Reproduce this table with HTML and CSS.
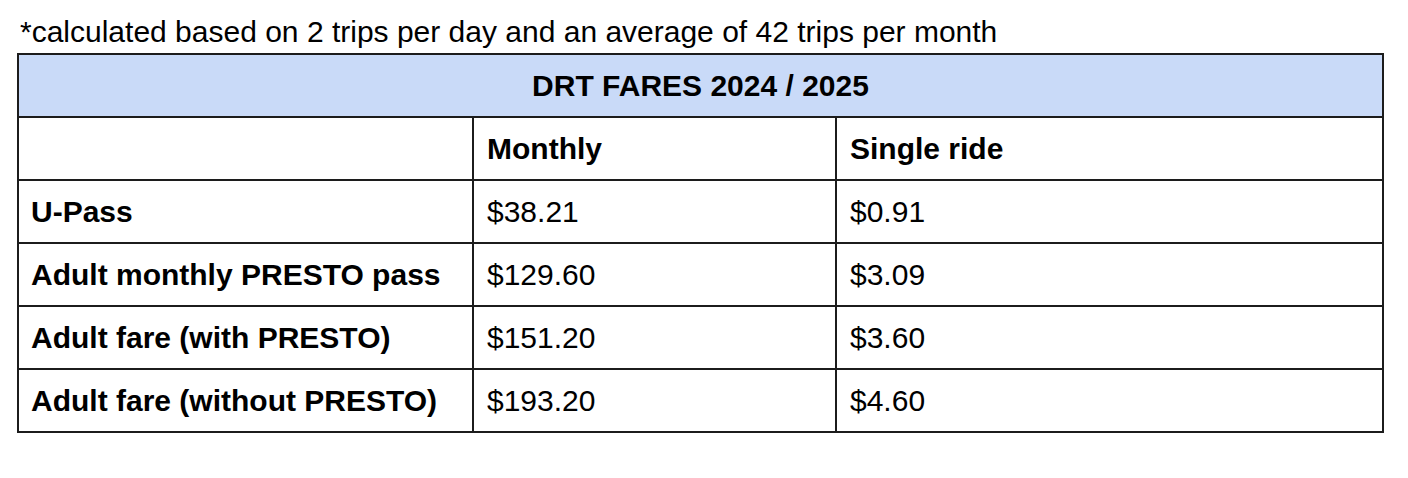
FILE: index.html
```html
<!DOCTYPE html>
<html>
<head>
<meta charset="utf-8">
<link rel="stylesheet" href="styles.css">
</head>
<body>
<div class="page">
  <p class="note">*calculated based on 2 trips per day and an average of 42 trips per month</p>
  <table class="fares">
    <colgroup>
      <col class="c1"><col class="c2"><col class="c3">
    </colgroup>
    <tr><th colspan="3" class="title">DRT FARES 2024 / 2025</th></tr>
    <tr><td></td><td class="b">Monthly</td><td class="b">Single ride</td></tr>
    <tr><td class="b">U-Pass</td><td>$38.21</td><td>$0.91</td></tr>
    <tr><td class="b">Adult monthly PRESTO pass</td><td>$129.60</td><td>$3.09</td></tr>
    <tr><td class="b">Adult fare (with PRESTO)</td><td>$151.20</td><td>$3.60</td></tr>
    <tr><td class="b">Adult fare (without PRESTO)</td><td>$193.20</td><td>$4.60</td></tr>
  </table>
</div>
</body>
</html>
```
FILE: styles.css
```css
html, body { margin: 0; padding: 0; background: #fff; }
body { font-family: "Liberation Sans", Arial, sans-serif; color: #000; }
.page { padding: 15px 0 0 17px; }
.note { margin: 0 0 5px 3px; font-size: 30px; line-height: 33px; }
.fares { border-collapse: collapse; width: 1367px; table-layout: fixed; }
.c1 { width: 455px; }
.c2 { width: 363px; }
.fares th, .fares td {
  border: 2px solid #1c1c1c;
  height: 61px;
  padding: 0 0 0 12px;
  font-size: 30px;
  text-align: left;
  vertical-align: middle;
}
.fares td:not(:first-child) { padding-left: 13px; }
.fares .title { background: #c9daf8; text-align: center; padding: 0; font-weight: bold; }
.b { font-weight: bold; }
```
